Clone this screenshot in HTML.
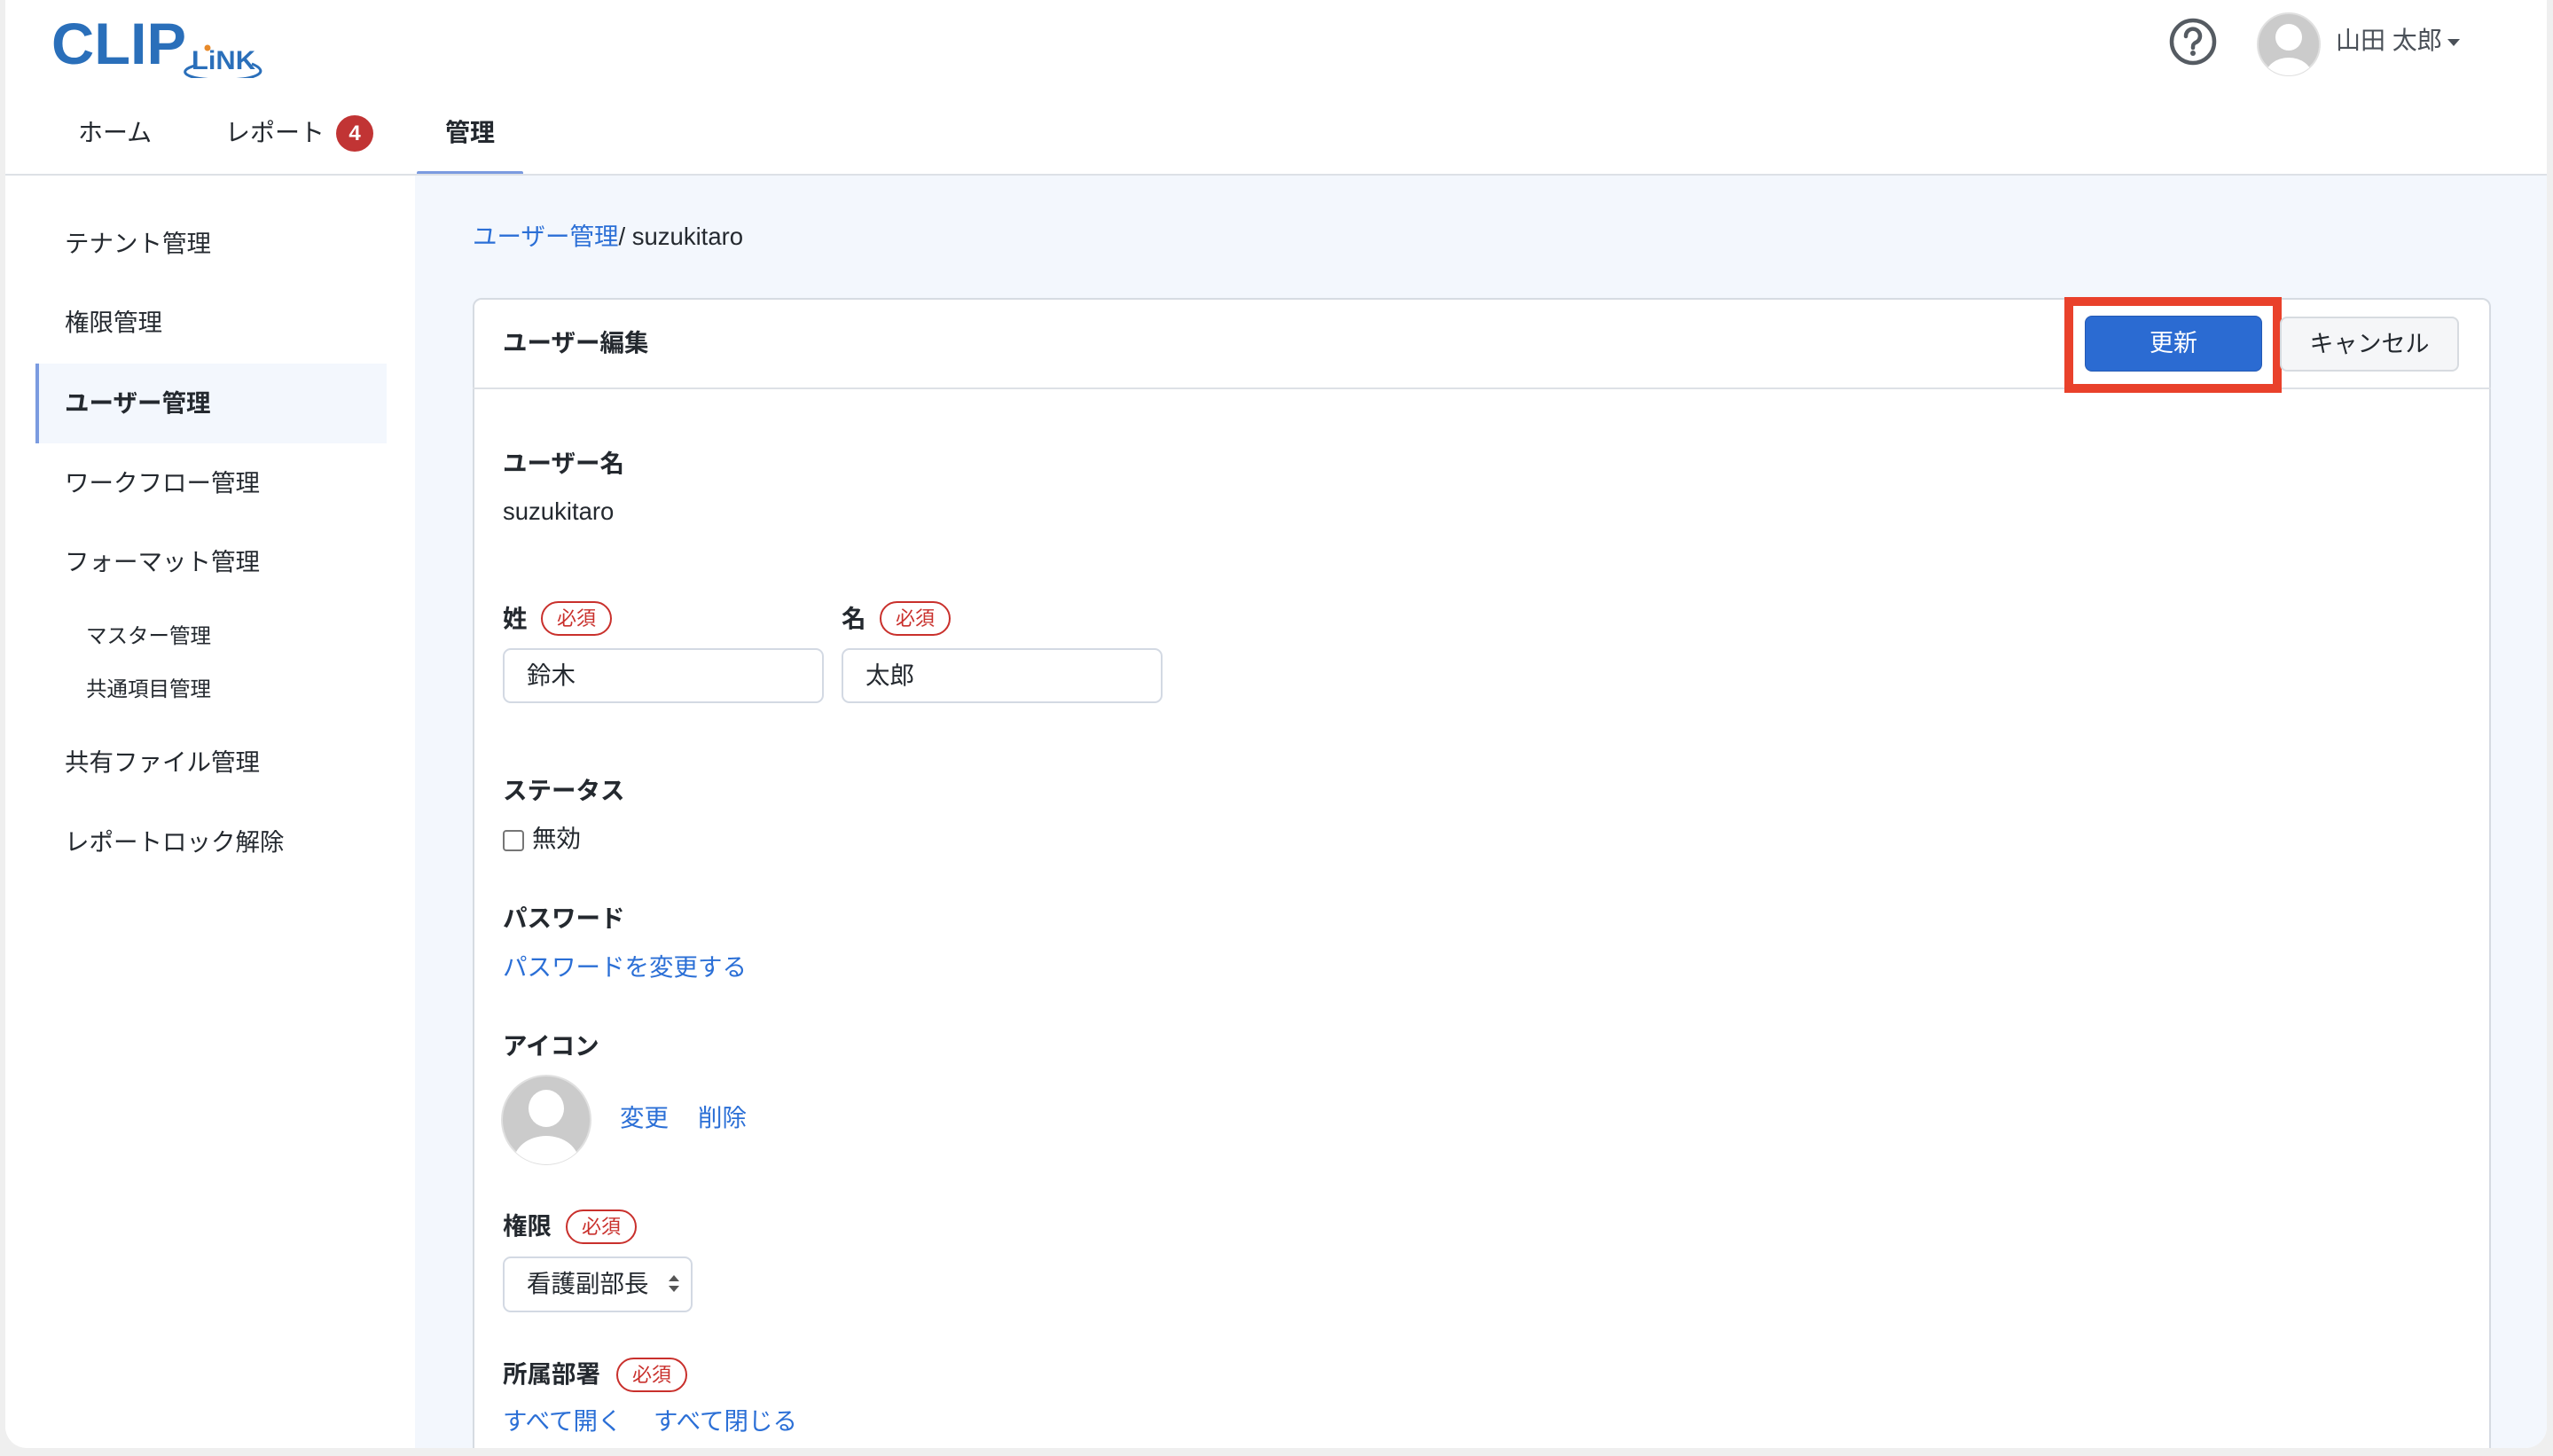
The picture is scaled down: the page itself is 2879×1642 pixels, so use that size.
<!DOCTYPE html>
<html><head><meta charset="utf-8"><style>
*{margin:0;padding:0;box-sizing:border-box}
body{width:2879px;height:1642px;background:#efefef;font-family:"Liberation Sans","Noto Sans CJK JP",sans-serif;color:#24292f;position:relative;overflow:hidden}
.win{position:absolute;left:6px;top:0;width:2866px;height:1633px;background:#fff;border-radius:0 0 24px 24px;overflow:hidden}
.a{position:absolute;white-space:nowrap;line-height:40px;font-size:27.5px}
.b{font-weight:bold}
.blue{color:#2b6fd6}
.req{position:absolute;height:39px;border:2px solid #c9302c;border-radius:20px;color:#c9302c;font-size:22px;line-height:35px;text-align:center;width:80px}
.inp{position:absolute;border:2px solid #d3d9e3;border-radius:9px;background:#fff}
</style></head><body>
<div class="win">
<svg style="position:absolute;left:52px;top:14px" width="250" height="74" viewBox="0 0 250 74">
<text x="0" y="58" font-family="Liberation Sans" font-weight="bold" font-size="66" fill="#2a6fba" textLength="152" lengthAdjust="spacingAndGlyphs">CLIP</text>
<text x="158" y="64" font-family="Liberation Sans" font-weight="bold" font-size="30" fill="#2a6fba" textLength="72" lengthAdjust="spacingAndGlyphs">LiNK</text>
<circle cx="176" cy="40" r="3.5" fill="#e88a2a"/>
<path d="M162 60 C140 66 150 76 192 76 C236 76 246 66 226 58" fill="none" stroke="#2a6fba" stroke-width="3"/>
</svg>
<div class="a" style="left:82px;top:130px;font-size:28px">ホーム</div>
<div class="a" style="left:248px;top:130px;font-size:28px">レポート</div>
<div style="position:absolute;left:373px;top:130px;width:42px;height:41px;border-radius:50%;background:#c13434;color:#fff;font-weight:bold;font-size:24px;line-height:41px;text-align:center">4</div>
<div class="a b" style="left:496px;top:130px;font-size:28px">管理</div>
<div style="position:absolute;left:464px;top:193px;width:120px;height:5px;background:#7b9be0;border-radius:2px"></div>
<div style="position:absolute;left:0;top:196px;width:2866px;height:2px;background:#dde1e6"></div>
<svg style="position:absolute;left:2440px;top:19px" width="56" height="56" viewBox="0 0 56 56"><circle cx="27" cy="28" r="24" fill="none" stroke="#555b62" stroke-width="4.5"/><path d="M19 22a8 8 0 1 1 11 7c-2 1-3 2-3 5v1" fill="none" stroke="#555b62" stroke-width="4.5" stroke-linecap="round"/><circle cx="27" cy="41" r="3" fill="#555b62"/></svg>
<svg style="position:absolute;left:2538px;top:13px" width="74" height="74" viewBox="0 0 74 74"><defs><clipPath id="c1"><circle cx="37" cy="37" r="35"/></clipPath></defs><circle cx="37" cy="37" r="35" fill="#cbcbcb" stroke="#e0e0e0" stroke-width="2"/><g clip-path="url(#c1)"><circle cx="37" cy="29" r="15" fill="#fff"/><ellipse cx="37" cy="72" rx="26" ry="20" fill="#fff"/></g></svg>
<div class="a" style="left:2628px;top:26px;font-size:28px;color:#4a5058">山田 太郎</div>
<div style="position:absolute;left:2754px;top:44px;border-left:7px solid transparent;border-right:7px solid transparent;border-top:8px solid #4a5058"></div>
<div style="position:absolute;left:462px;top:198px;width:2404px;height:1435px;background:#f3f7fd"></div>
<div class="a" style="left:67px;top:255px">テナント管理</div>
<div class="a" style="left:67px;top:344px">権限管理</div>
<div style="position:absolute;left:34px;top:410px;width:396px;height:90px;background:#f3f7fd;border-left:4px solid #7b9be0"></div>
<div class="a b" style="left:67px;top:435px">ユーザー管理</div>
<div class="a" style="left:67px;top:525px">ワークフロー管理</div>
<div class="a" style="left:67px;top:614px">フォーマット管理</div>
<div class="a" style="left:91px;top:697px;font-size:23.5px">マスター管理</div>
<div class="a" style="left:91px;top:757px;font-size:23.5px">共通項目管理</div>
<div class="a" style="left:67px;top:840px">共有ファイル管理</div>
<div class="a" style="left:67px;top:930px">レポートロック解除</div>
<div class="a" style="left:527px;top:247px"><span class="blue">ユーザー管理</span>/ suzukitaro</div>
<div style="position:absolute;left:527px;top:336px;width:2276px;height:1320px;background:#fff;border:2px solid #d6dbe2;border-radius:10px"></div>
<div style="position:absolute;left:527px;top:437px;width:2276px;height:2px;background:#dde1e6"></div>
<div class="a b" style="left:561px;top:367px">ユーザー編集</div>
<div style="position:absolute;left:2322px;top:335px;width:245px;height:108px;border:10px solid #e9412b"></div>
<div style="position:absolute;left:2345px;top:356px;width:200px;height:63px;background:#2b6bd2;border:1px solid #2459b3;border-radius:8px;color:#fff;font-size:27px;line-height:61px;text-align:center">更新</div>
<div style="position:absolute;left:2565px;top:357px;width:202px;height:62px;background:#f5f6f8;border:2px solid #d7dbe0;border-radius:8px;font-size:27px;line-height:58px;text-align:center">キャンセル</div>
<div class="a b" style="left:561px;top:503px">ユーザー名</div>
<div class="a" style="left:561px;top:557px">suzukitaro</div>
<div class="a b" style="left:561px;top:678px">姓</div>
<div class="req" style="left:604px;top:678px">必須</div>
<div class="a b" style="left:943px;top:678px">名</div>
<div class="req" style="left:986px;top:678px">必須</div>
<div class="inp" style="left:561px;top:731px;width:362px;height:62px"></div>
<div class="a" style="left:588px;top:742px">鈴木</div>
<div class="inp" style="left:943px;top:731px;width:362px;height:62px"></div>
<div class="a" style="left:970px;top:742px">太郎</div>
<div class="a b" style="left:561px;top:872px">ステータス</div>
<div style="position:absolute;left:561px;top:936px;width:24px;height:24px;border:2px solid #767676;border-radius:4px;background:#fff"></div>
<div class="a" style="left:594px;top:926px">無効</div>
<div class="a b" style="left:561px;top:1016px">パスワード</div>
<div class="a blue" style="left:561px;top:1071px">パスワードを変更する</div>
<div class="a b" style="left:561px;top:1160px">アイコン</div>
<svg style="position:absolute;left:558px;top:1211px" width="104" height="104" viewBox="0 0 104 104"><defs><clipPath id="c2"><circle cx="52" cy="52" r="50"/></clipPath></defs><circle cx="52" cy="52" r="50" fill="#cbcbcb" stroke="#e0e0e0" stroke-width="2"/><g clip-path="url(#c2)"><ellipse cx="52" cy="39" rx="20" ry="21" fill="#fff"/><ellipse cx="52" cy="100" rx="37" ry="30" fill="#fff"/></g></svg>
<div class="a blue" style="left:693px;top:1241px">変更</div>
<div class="a blue" style="left:781px;top:1241px">削除</div>
<div class="a b" style="left:561px;top:1363px">権限</div>
<div class="req" style="left:632px;top:1364px">必須</div>
<div class="inp" style="left:561px;top:1417px;width:214px;height:63px"></div>
<div class="a" style="left:588px;top:1428px">看護副部長</div>
<div style="position:absolute;left:748px;top:1438px;border-left:6px solid transparent;border-right:6px solid transparent;border-bottom:7px solid #555"></div>
<div style="position:absolute;left:748px;top:1450px;border-left:6px solid transparent;border-right:6px solid transparent;border-top:7px solid #555"></div>
<div class="a b" style="left:561px;top:1530px">所属部署</div>
<div class="req" style="left:689px;top:1531px">必須</div>
<div class="a blue" style="left:561px;top:1583px">すべて開く</div>
<div class="a blue" style="left:731px;top:1583px">すべて閉じる</div>
</div>
</body></html>
